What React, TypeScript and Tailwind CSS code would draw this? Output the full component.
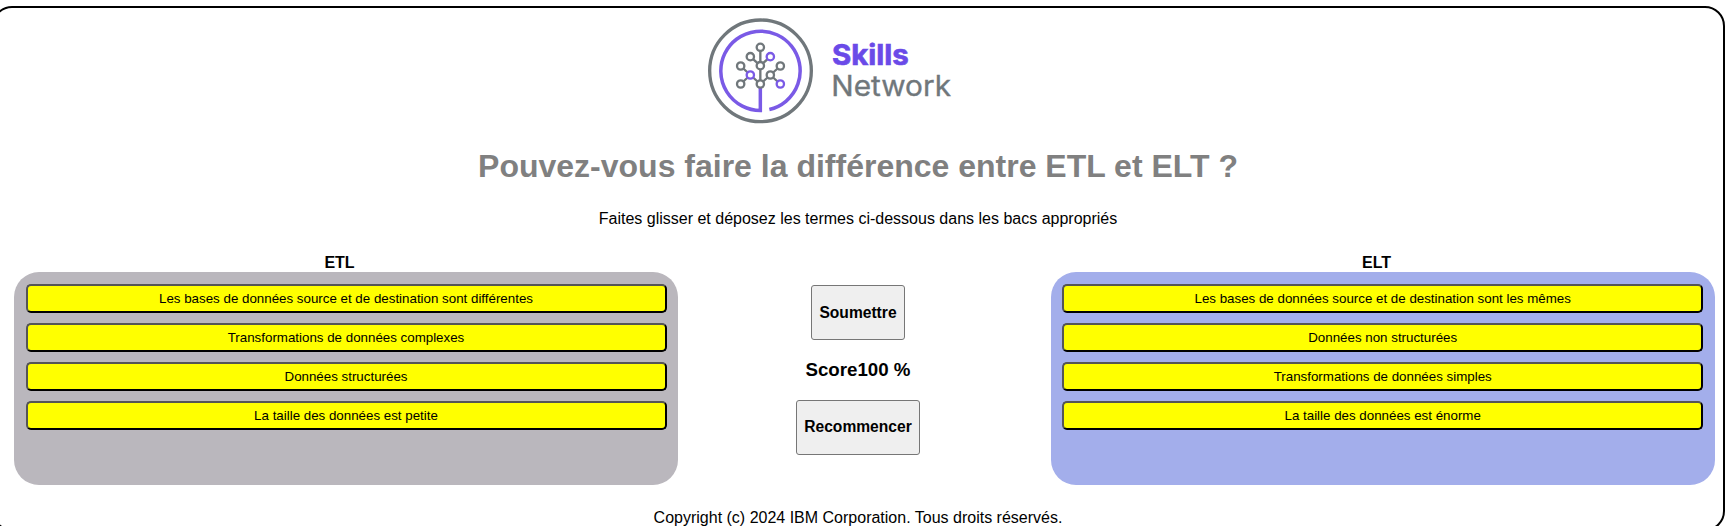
import React from "react";

const etlTerms = [
  "Les bases de données source et de destination sont différentes",
  "Transformations de données complexes",
  "Données structurées",
  "La taille des données est petite",
];

const eltTerms = [
  "Les bases de données source et de destination sont les mêmes",
  "Données non structurées",
  "Transformations de données simples",
  "La taille des données est énorme",
];

function Logo() {
  const gray = "#70777b";
  const purple = "#7a5ae6";
  const nodes: [number, number, string][] = [
    [211, 141, gray],
    [181, 169, gray],
    [241, 169, purple],
    [211, 196, gray],
    [152, 197, gray],
    [271, 197, gray],
    [181, 224, purple],
    [241, 224, gray],
    [152, 251, gray],
    [211, 251, gray],
    [271, 251, purple],
  ];
  return (
    <svg
      className="block h-[120px] w-[260px]"
      viewBox="39 29 780 360"
      role="img"
      aria-label="Skills Network"
    >
      <circle cx="211.5" cy="211.5" r="152.5" fill="none" stroke={gray} strokeWidth="10" />
      <path
        d="M211 262V330.5A119 119 0 1 1 238 327.500"
        fill="none"
        stroke={purple}
        strokeWidth="10.5"
      />
      <path
        d="M211 141V251M181 169L211 196L241 169M152 197L181 224L211 251L241 224L271 197M152 251L181 224M241 224L271 251"
        fill="none"
        stroke={gray}
        strokeWidth="7"
      />
      {nodes.map(([x, y, color]) => (
        <circle key={`${x}-${y}`} cx={x} cy={y} r="11" fill="#fff" stroke={color} strokeWidth="7" />
      ))}
      <text
        x="426"
        y="193"
        className="font-['Inter',sans-serif] font-bold"
        fontSize="85"
        fill="#6a4ae8"
        stroke="#6a4ae8"
        strokeWidth="2"
        textLength="230"
        lengthAdjust="spacingAndGlyphs"
      >
        Skills
      </text>
      <text
        x="424"
        y="286"
        className="font-['Inter',sans-serif] font-normal"
        fontSize="84"
        fill={gray}
        stroke={gray}
        strokeWidth="1"
        textLength="359"
        lengthAdjust="spacingAndGlyphs"
      >
        Network
      </text>
    </svg>
  );
}

function Bin({
  title,
  terms,
  color,
}: {
  title: string;
  terms: string[];
  color: string;
}) {
  return (
    <section className="w-[664px]">
      <h4 className="h-[18px] pr-[13px] text-center text-base leading-[18px] font-bold">{title}</h4>
      <div className={`flex h-[213px] flex-col gap-2.5 rounded-[25px] pt-3 ${color}`}>
        {terms.map((term) => (
          <button
            key={term}
            className="h-[29px] shrink-0 rounded-[5px] border-2 border-t-[#555] border-r-black border-b-black border-l-[#555] bg-[#ff0] text-[13.333px] leading-[15px]"
          >
            {term}
          </button>
        ))}
      </div>
    </section>
  );
}

function ActionButton({ label, width }: { label: string; width: string }) {
  return (
    <button
      className={`h-[55px] rounded-[3px] border border-[#767676] bg-[#efefef] text-[15.600px] leading-[18px] font-bold ${width}`}
    >
      {label}
    </button>
  );
}

export default function App() {
  return (
    <div className="h-[526px] w-[1725px] overflow-hidden bg-white pt-1.5 font-['Liberation_Sans',Arial,sans-serif] text-black">
      <main className="-ml-2 flex h-[525px] w-[1733px] flex-col rounded-[20px] border-2 border-black">
        <div className="ml-[709px] pt-0.5">
          <Logo />
        </div>
        <h1 className="mt-[18px] pr-px text-center text-[32px] leading-[36px] font-bold text-[#808080]">
          Pouvez-vous faire la différence entre ETL et ELT ?
        </h1>
        <p className="mt-[26px] pr-px text-center text-base leading-[18px]">
          Faites glisser et déposez les termes ci-dessous dans les bacs appropriés
        </p>
        <div className="mt-[26px] flex justify-between pr-2 pl-5">
          <Bin title="ETL" terms={etlTerms} color="bg-[#bab7bd] px-[11.500px]" />
          <div className="mr-[13px] flex flex-col items-center pt-[31px]">
            <ActionButton label="Soumettre" width="w-[94px]" />
            <h3 className="my-[19px] text-[18.720px] leading-[22px] font-bold">Score100 %</h3>
            <ActionButton label="Recommencer" width="w-[124px] pb-0.5" />
          </div>
          <Bin title="ELT" terms={eltTerms} color="bg-[#a3aeeb] pl-[11.200px] pr-[11.800px]" />
        </div>
        <p className="mt-6 pr-px text-center text-base leading-[18px]">
          Copyright (c) 2024 IBM Corporation. Tous droits réservés.
        </p>
      </main>
    </div>
  );
}
